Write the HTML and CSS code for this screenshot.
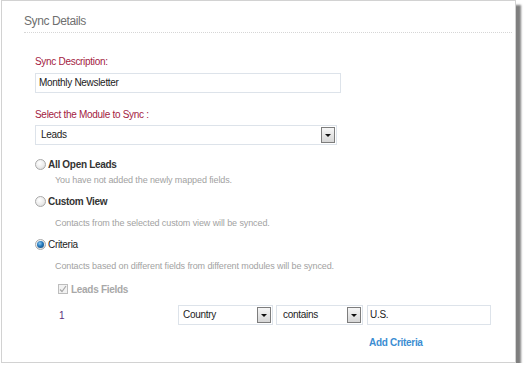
FILE: index.html
```html
<!DOCTYPE html>
<html lang="en">
<head>
    <meta charset="UTF-8">
    <title>Sync Details</title>
    <link rel="stylesheet" href="styles.css">
</head>
<body>
    <div class="panel">
        <h2 class="panel-title">Sync Details</h2>

        <form class="sync-form">
            <!-- description -->
            <div class="field-label first">Sync Description:</div>
            <div class="text-box desc-box">Monthly Newsletter</div>

            <!-- module -->
            <div class="field-label">Select the Module to Sync :</div>
            <div class="select-box module-box">
                <span class="select-text">Leads</span>
                <span class="select-btn"><i></i></span>
            </div>

            <!-- sync options -->
            <div class="option first-option">
                <span class="radio"></span>
                <span class="option-name">All Open Leads</span>
            </div>
            <div class="option-note tight">You have not added the newly mapped fields.</div>

            <div class="option">
                <span class="radio"></span>
                <span class="option-name">Custom View</span>
            </div>
            <div class="option-note">Contacts from the selected custom view will be synced.</div>

            <div class="option">
                <span class="radio checked"></span>
                <span class="option-name plain">Criteria</span>
            </div>
            <div class="option-note">Contacts based on different fields from different modules will be synced.</div>

            <div class="check-row">
                <span class="checkbox">
                    <svg width="8" height="8" viewBox="0 0 8 8"><polyline points="1,4.5 3,6.5 7,1" fill="none" stroke="#a8a8a8" stroke-width="1.2"/></svg>
                </span>
                <span class="check-name">Leads Fields</span>
            </div>

            <div class="criteria-row">
                <span class="criteria-num">1</span>
                <div class="select-box field-box">
                    <span class="select-text">Country</span>
                    <span class="select-btn"><i></i></span>
                </div>
                <div class="select-box op-box">
                    <span class="select-text">contains</span>
                    <span class="select-btn"><i></i></span>
                </div>
                <div class="text-box value-box">U.S.</div>
            </div>

            <a class="add-link" href="#">Add Criteria</a>
        </form>
    </div>
</body>
</html>
```

FILE: styles.css
```css
body {
    margin: 0;
    background: #fff;
    font-family: 'Liberation Sans', Arial, sans-serif;
    color: #222;
}
.panel {
    margin-left: 1px;
    width: 515px;
    height: 363px;
    box-sizing: border-box;
    border: 1px solid #d2d2d2;
    background: #fff;
    box-shadow: 5px 5px 2px rgba(0, 0, 0, 0.5);
}
.panel-title {
    margin: 0 3px 0 22px;
    padding: 13px 0 4px 0;
    font-size: 12px;
    line-height: 14px;
    font-weight: normal;
    letter-spacing: -0.4px;
    color: #6f6f6f;
    border-bottom: 1px dotted #d6d6d6;
}
.sync-form {
    padding-left: 33px;
    font-size: 10px;
    letter-spacing: -0.3px;
}
.field-label {
    margin-top: 16px;
    line-height: 12px;
    color: #a3223f;
}
.field-label.first {
    margin-top: 23px;
}
.text-box,
.select-box {
    position: relative;
    box-sizing: border-box;
    height: 20px;
    margin-top: 5px;
    padding-left: 3px;
    border: 1px solid #dde3ea;
    line-height: 18px;
    color: #222;
}
.desc-box {
    width: 306px;
}
.module-box {
    width: 302px;
    margin-top: 4px;
    padding-left: 5px;
}
.select-btn {
    position: absolute;
    right: 1px;
    top: 1px;
    width: 14px;
    height: 16px;
    box-sizing: border-box;
    border: 1px solid #7d7d7d;
    background: linear-gradient(#f6f6f6, #d6d6d6);
    display: flex;
    align-items: center;
    justify-content: center;
}
.select-btn i {
    width: 0;
    height: 0;
    border-left: 3px solid transparent;
    border-right: 3px solid transparent;
    border-top: 3px solid #111;
}
.option {
    display: flex;
    align-items: center;
    height: 14px;
    margin-top: 8px;
}
.option.first-option {
    margin-top: 12px;
}
.radio {
    width: 11px;
    height: 11px;
    box-sizing: border-box;
    border-radius: 50%;
    border: 1px solid #a9a9a9;
    background: radial-gradient(circle at 40% 35%, #fff 0, #ececec 55%, #cfcfcf 100%);
    position: relative;
}
.radio.checked::after {
    content: '';
    position: absolute;
    left: 1px;
    top: 1px;
    width: 7px;
    height: 7px;
    border-radius: 50%;
    background: radial-gradient(circle at 40% 35%, #8ccaf2 0, #2477bb 45%, #0f426f 100%);
}
.option-name {
    margin-left: 2px;
    font-weight: bold;
    color: #333;
}
.option-name.plain {
    font-weight: normal;
    color: #222;
}
.option-note {
    margin: 9px 0 0 20px;
    font-size: 9px;
    line-height: 12px;
    letter-spacing: -0.1px;
    color: #a2a2a2;
}
.option-note.tight {
    margin-top: 3px;
}
.check-row {
    display: flex;
    align-items: center;
    height: 14px;
    margin: 10px 0 0 23px;
}
.checkbox {
    width: 10px;
    height: 10px;
    box-sizing: border-box;
    border: 1px solid #bdbdbd;
    background: #f2f2f2;
    display: flex;
    align-items: center;
    justify-content: center;
}
.check-name {
    margin-left: 3px;
    font-weight: bold;
    color: #a8a8a8;
}
.criteria-row {
    display: flex;
    align-items: center;
    margin-top: 9px;
}
.criteria-num {
    width: 119px;
    padding-left: 24px;
    box-sizing: content-box;
    color: #5b2d7c;
}
.criteria-row .select-box,
.criteria-row .text-box {
    margin-top: 0;
}
.field-box {
    width: 95px;
    padding-left: 4px;
}
.op-box {
    width: 87px;
    margin-left: 3px;
    padding-left: 6px;
}
.value-box {
    width: 124px;
    margin-left: 4px;
    padding-left: 2px;
}
.add-link {
    display: block;
    margin: 12px 0 0 334px;
    line-height: 12px;
    font-weight: bold;
    color: #3b8dd2;
    text-decoration: none;
}
```
